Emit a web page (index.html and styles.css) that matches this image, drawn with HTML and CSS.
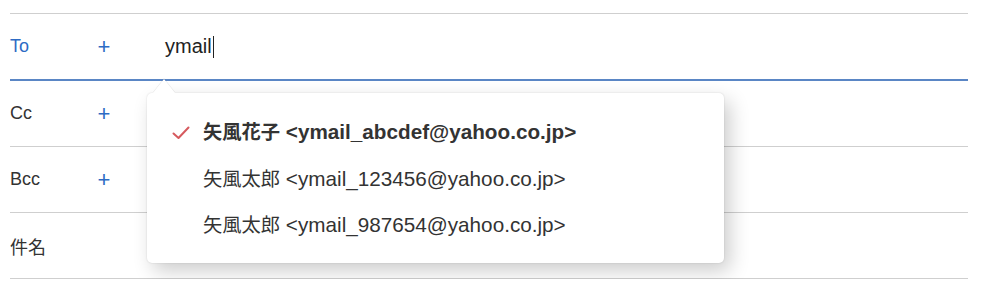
FILE: index.html
```html
<!DOCTYPE html>
<html lang="ja">
<head>
    <meta charset="UTF-8">
    <meta name="viewport" content="width=device-width, initial-scale=1.0">
    <title>メール作成</title>
    <link rel="stylesheet" href="styles.css">
</head>
<body>
    <div class="compose">
        <div class="field field-active">
            <span class="label label-active">To</span>
            <button class="add">+</button>
            <span class="input">ymail<span class="caret"></span></span>
        </div>
        <div class="field">
            <span class="label">Cc</span>
            <button class="add">+</button>
        </div>
        <div class="field">
            <span class="label">Bcc</span>
            <button class="add">+</button>
        </div>
        <div class="field">
            <span class="label">件名</span>
        </div>

        <div class="suggest">
            <ul class="suggest-list">
                <li class="suggest-item selected">
                    <svg class="check" width="18" height="14" viewBox="0 0 18 14">
                        <path d="M1.5 7.5 L6.5 12 L16.5 1.5" fill="none" stroke="#d65a5e" stroke-width="2" stroke-linecap="round" stroke-linejoin="round"/>
                    </svg>
                    <span class="name">矢風花子</span> &lt;ymail_abcdef@yahoo.co.jp&gt;
                </li>
                <li class="suggest-item"><span class="name">矢風太郎</span> &lt;ymail_123456@yahoo.co.jp&gt;</li>
                <li class="suggest-item"><span class="name">矢風太郎</span> &lt;ymail_987654@yahoo.co.jp&gt;</li>
            </ul>
        </div>
    </div>
</body>
</html>
```

FILE: styles.css
```css
body {
    margin: 0;
    background: #fff;
    font-family: "Liberation Sans", "Noto Sans CJK JP", sans-serif;
    color: #333;
}

.compose {
    position: relative;
    margin: 13px 13px 0 10px;
    border-top: 1px solid #cfcfcf;
}

.field {
    display: flex;
    align-items: center;
    height: 65px;
    border-bottom: 1px solid #cfcfcf;
}

.field-active {
    border-bottom: 2px solid #5a86c5;
}

.label {
    width: 87px;
    font-size: 18px;
    color: #333;
}

.label-active {
    color: #2d6bc4;
}

.add {
    width: 14px;
    padding: 0;
    margin-right: 54px;
    border: none;
    background: none;
    color: #2d6bc4;
    font-family: "Liberation Sans", sans-serif;
    font-size: 22px;
    font-weight: 300;
    line-height: 1;
    cursor: pointer;
}

.input {
    font-size: 20px;
    color: #222;
}

.caret {
    display: inline-block;
    width: 1px;
    height: 22px;
    margin-left: 1px;
    background: #222;
    vertical-align: -5px;
}

.suggest {
    position: absolute;
    left: 137px;
    top: 79px;
    width: 577px;
    background: #fff;
    border-radius: 5px;
    box-shadow: 0 0 2px rgba(0, 0, 0, 0.14), 6px 8px 20px rgba(0, 0, 0, 0.2);
}

.suggest::before {
    content: "";
    position: absolute;
    left: 6px;
    top: -14px;
    width: 0;
    height: 0;
    border-left: 11px solid transparent;
    border-right: 11px solid transparent;
    border-bottom: 14px solid #fff;
    filter: drop-shadow(0 -1px 0 rgba(0, 0, 0, 0.08));
}

.suggest-list {
    list-style: none;
    margin: 0;
    padding: 16px 0 14px;
}

.suggest-item {
    position: relative;
    height: 46.5px;
    line-height: 46.5px;
    padding-left: 56px;
    font-size: 20.7px;
    color: #333;
    white-space: nowrap;
}

.suggest-item .name {
    font-size: 19.3px;
}

.suggest-item.selected {
    font-weight: bold;
}

.check {
    position: absolute;
    left: 25px;
    top: 17px;
}
```
